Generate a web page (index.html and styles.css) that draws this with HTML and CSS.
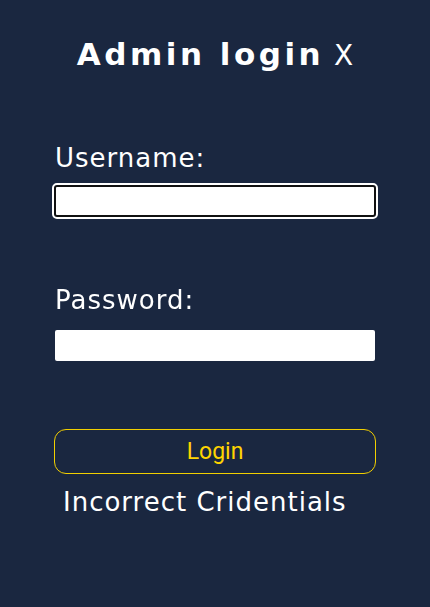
FILE: index.html
```html
<!DOCTYPE html>
<html>
<head>
<meta charset="utf-8">
<link rel="stylesheet" href="styles.css">
</head>
<body>
<div class="panel">
  <h1 class="title"><span class="title-main">Admin login</span> <span class="close">X</span></h1>
  <form class="form">
    <label class="label" for="user">Username:</label>
    <input class="field field-focus" id="user" type="text" autofocus>
    <label class="label label-pass" for="pass">Password:</label>
    <input class="field" id="pass" type="password">
    <button class="btn" type="button">Login</button>
    <p class="error">Incorrect Cridentials</p>
  </form>
</div>
</body>
</html>
```
FILE: styles.css
```css
html, body {
  margin: 0;
  padding: 0;
  background: #1a2740;
  height: 100%;
}
.panel {
  font-family: "DejaVu Sans", sans-serif;
  color: #ffffff;
  padding-top: 34px;
}
.title {
  margin: 0;
  text-align: center;
  font-size: 31px;
  line-height: 40px;
  font-weight: normal;
}
.title-main {
  font-weight: bold;
  letter-spacing: 3.5px;
}
.close {
  font-weight: normal;
  font-size: 28px;
}
.form {
  display: flex;
  flex-direction: column;
  align-items: flex-start;
  padding: 0 55px;
  margin-top: 64px;
}
.label {
  font-size: 26px;
  line-height: 36px;
  letter-spacing: 1px;
}
.label-pass {
  margin-top: 65px;
}
.field {
  box-sizing: border-box;
  width: 320px;
  height: 31px;
  margin-top: 12px;
  border: none;
  border-radius: 2px;
  background: #ffffff;
  padding: 0 3px;
  font-size: 16px;
  outline: none;
}
.field-focus {
  border: 2px solid #111111;
  outline: 2px solid #ffffff;
  outline-offset: 0;
  border-radius: 3px;
  height: 32px;
  width: 322px;
  margin-top: 9px;
  margin-left: -1px;
  caret-color: #000;
}
.btn {
  box-sizing: border-box;
  margin-top: 68px;
  width: 322px;
  height: 45px;
  margin-left: -1px;
  background: transparent;
  border: 1px solid #f2cf00;
  border-radius: 12px;
  color: #ffd400;
  font-family: Roboto, sans-serif;
  font-size: 23px;
  cursor: pointer;
}
.error {
  margin: 11px 0 0 8px;
  font-size: 26px;
  line-height: 34px;
  letter-spacing: 1px;
}
```
